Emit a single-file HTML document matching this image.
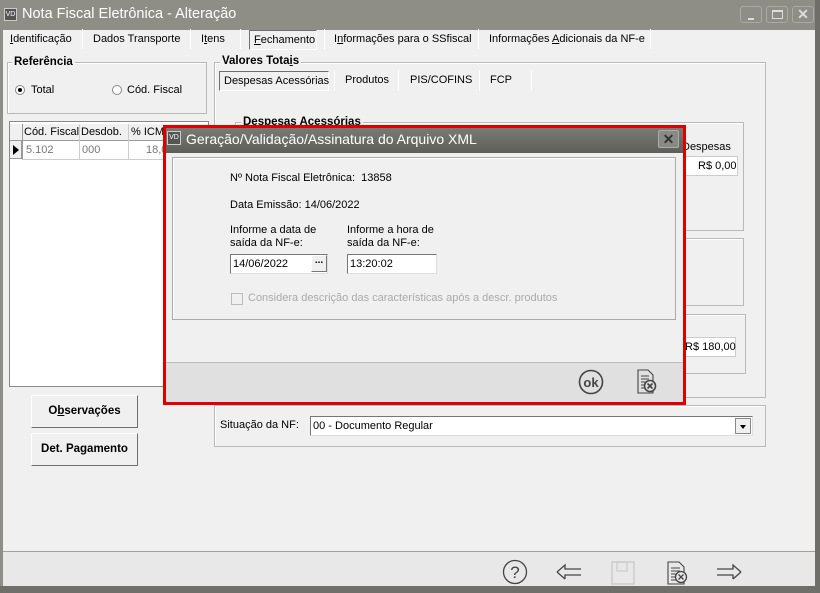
<!DOCTYPE html>
<html><head><meta charset="utf-8"><style>
*{box-sizing:border-box;margin:0;padding:0}
body{width:820px;height:593px;overflow:hidden;background:#f0f0f0;font-family:"Liberation Sans",sans-serif;font-size:11px;color:#000;position:relative}
.a{position:absolute}
.t{position:absolute;white-space:nowrap}
.grp{position:absolute;border:1px solid #b9b9b9;box-shadow:inset 1px 1px 0 #fff}
.lbl{position:absolute;background:#f0f0f0;font-weight:bold;padding:0 2px;font-size:11.5px}
.sep{position:absolute;width:1px;background:#a0a0a0;border-right:1px solid #fff}
.btn{position:absolute;background:#f0f0f0;border:1px solid;border-color:#fff #707070 #707070 #fff;font-weight:bold;text-align:center;font-size:11.5px}
</style></head><body>
<div class="a" style="left:0;top:0;width:820px;height:30px;background:#8e8d86"></div>
<div class="a" style="left:0;top:0;width:3px;height:593px;background:#8e8d86"></div>
<div class="a" style="left:815px;top:0;width:5px;height:593px;background:#6f6e69"></div>
<div class="a" style="left:0;top:586px;width:820px;height:7px;background:#6f6e69"></div>
<div class="a" style="left:4px;top:8px;width:13px;height:13px;background:#555;border:1px solid #ccc;color:#fff;font-size:7px;line-height:11px;text-align:center">VD</div>
<div class="t" style="left:22px;top:6px;font-size:14.5px;color:#fff">Nota Fiscal Eletrônica - Alteração</div>
<div class="a" style="left:740px;top:6px;width:22px;height:17px;border:1px solid #aaa;border-radius:3px;background:#8e8d86"><div class="a" style="left:7px;top:11px;width:6px;height:2px;background:#ddd"></div></div>
<div class="a" style="left:766px;top:6px;width:22px;height:17px;border:1px solid #aaa;border-radius:3px;background:#8e8d86"><div class="a" style="left:5px;top:3px;width:11px;height:9px;border:1px solid #ddd;border-top-width:2px"></div></div>
<div class="a" style="left:792px;top:6px;width:22px;height:17px;border:1px solid #aaa;border-radius:3px;background:#8e8d86;color:#ddd;font-weight:bold;font-size:14px;text-align:center;line-height:15px">✕</div>

<div class="t" style="left:10px;top:33px"><u>I</u>dentificação</div>
<div class="sep" style="left:82px;top:29px;height:20px"></div>
<div class="t" style="left:93px;top:33px">Dados Transporte</div>
<div class="sep" style="left:190px;top:29px;height:20px"></div>
<div class="t" style="left:201px;top:33px">I<u>t</u>ens</div>
<div class="sep" style="left:240px;top:29px;height:20px"></div>
<div class="a" style="left:249px;top:30px;width:68px;height:20px;border:1px solid;border-color:#707070 #fff #fff #707070;background:#f0f0f0"></div>
<div class="t" style="left:254px;top:34px"><u>F</u>echamento</div>
<div class="sep" style="left:324px;top:29px;height:20px"></div>
<div class="t" style="left:334px;top:33px">I<u>n</u>formações para o SSfiscal</div>
<div class="sep" style="left:478px;top:29px;height:20px"></div>
<div class="t" style="left:489px;top:33px">Informações <u>A</u>dicionais da NF-e</div>
<div class="sep" style="left:650px;top:29px;height:20px"></div>

<div class="grp" style="left:7px;top:62px;width:200px;height:52px"></div>
<div class="lbl" style="left:12px;top:56px">Referência</div>
<div class="a" style="left:15px;top:85px;width:10px;height:10px;border:1px solid #888;border-radius:50%;background:#fff"><div class="a" style="left:2px;top:2px;width:4px;height:4px;border-radius:50%;background:#000"></div></div>
<div class="t" style="left:31px;top:84px">Total</div>
<div class="a" style="left:112px;top:85px;width:10px;height:10px;border:1px solid #888;border-radius:50%;background:#fff"></div>
<div class="t" style="left:127px;top:84px">Cód. Fiscal</div>

<div class="a" style="left:9px;top:121px;width:200px;height:266px;background:#fff;border:1px solid #888"></div>
<div class="a" style="left:10px;top:124px;width:198px;height:17px;background:#f0f0f0;border-bottom:1px solid #999"></div>
<div class="a" style="left:10px;top:141px;width:12px;height:18px;background:#f0f0f0;border-right:1px solid #999;border-bottom:1px solid #999"></div>
<div class="a" style="left:13px;top:145px;width:0;height:0;border-left:6px solid #000;border-top:5px solid transparent;border-bottom:5px solid transparent"></div>
<div class="a" style="left:22px;top:124px;width:1px;height:35px;background:#999"></div>
<div class="a" style="left:79px;top:124px;width:1px;height:35px;background:#ccc"></div>
<div class="a" style="left:128px;top:124px;width:1px;height:35px;background:#ccc"></div>
<div class="a" style="left:22px;top:159px;width:186px;height:1px;background:#ccc"></div>
<div class="t" style="left:24px;top:126px">Cód. Fiscal</div>
<div class="t" style="left:81px;top:126px">Desdob.</div>
<div class="t" style="left:131px;top:126px">% ICMS</div>
<div class="t" style="left:26px;top:144px;color:#777">5.102</div>
<div class="t" style="left:82px;top:144px;color:#777">000</div>
<div class="t" style="left:146px;top:144px;color:#777">18,00</div>

<div class="btn" style="left:31px;top:395px;width:107px;height:33px;line-height:31px">O<u>b</u>servações</div>
<div class="btn" style="left:31px;top:433px;width:107px;height:33px;line-height:31px">Det. Pagamento</div>

<div class="grp" style="left:214px;top:62px;width:552px;height:336px"></div>
<div class="lbl" style="left:220px;top:55px">Valores Tota<u>i</u>s</div>
<div class="a" style="left:219px;top:71px;width:110px;height:20px;border:1px solid;border-color:#707070 #fff #fff #707070"></div>
<div class="t" style="left:224px;top:75px">Despesas Acessórias</div>
<div class="sep" style="left:334px;top:70px;height:21px"></div>
<div class="t" style="left:345px;top:74px">Produtos</div>
<div class="sep" style="left:398px;top:70px;height:21px"></div>
<div class="t" style="left:410px;top:74px">PIS/COFINS</div>
<div class="sep" style="left:479px;top:70px;height:21px"></div>
<div class="t" style="left:490px;top:74px">FCP</div>
<div class="sep" style="left:531px;top:70px;height:21px"></div>
<div class="grp" style="left:235px;top:122px;width:509px;height:109px"></div>
<div class="lbl" style="left:241px;top:116px">Despesas Acessórias</div>
<div class="t" style="left:682px;top:141px">Despesas</div>
<div class="a" style="left:680px;top:156px;width:58px;height:20px;background:#fff;border:1px solid #ccc"></div>
<div class="t" style="left:698px;top:160px">R$ 0,00</div>
<div class="grp" style="left:235px;top:238px;width:509px;height:68px"></div>
<div class="grp" style="left:226px;top:314px;width:520px;height:60px"></div>
<div class="a" style="left:680px;top:337px;width:56px;height:20px;background:#fff;border:1px solid #ccc"></div>
<div class="t" style="left:685px;top:341px">R$ 180,00</div>

<div class="grp" style="left:214px;top:405px;width:552px;height:42px"></div>
<div class="t" style="left:220px;top:419px">Situação da NF:</div>
<div class="a" style="left:310px;top:416px;width:443px;height:20px;background:#fff;border:1px solid;border-color:#777 #ddd #ddd #777"></div>
<div class="t" style="left:313px;top:420px">00 - Documento Regular</div>
<div class="a" style="left:735px;top:418px;width:16px;height:16px;background:#f0f0f0;border:1px solid #888"><div class="a" style="left:4px;top:6px;border-top:4px solid #000;border-left:3px solid transparent;border-right:3px solid transparent"></div></div>

<div class="a" style="left:3px;top:551px;width:812px;height:1px;background:#a0a0a0"></div>
<div class="a" style="left:3px;top:552px;width:812px;height:34px;background:#e8e8e8"></div>
<svg class="a" style="left:500px;top:558px" width="250" height="28" viewBox="0 0 250 28" fill="none" stroke="#444" stroke-width="1.3">
<circle cx="15" cy="14" r="11.5"/>
<text x="15" y="20" font-size="17" font-family="Liberation Sans" fill="#444" stroke="none" text-anchor="middle">?</text>
<path d="M57 14 L65 7 V11 H81 M65 21 V17 H81 M57 14 L65 21"/>
<rect x="112" y="4" width="22" height="22" stroke="#ccc" stroke-width="1.5"/>
<rect x="117" y="4" width="10" height="9" stroke="#ccc"/>
<path d="M168 4 H179 L184 9 V26 H168 Z M171 10 H180 M171 13 H180 M171 16 H178 M171 19 H177 M171 22 H177" stroke-width="1.1"/>
<circle cx="181" cy="19" r="5.5" fill="#e8e8e8"/><path d="M178.5 16.5 L183.5 21.5 M183.5 16.5 L178.5 21.5"/>
<path d="M241 14 L233 7 V11 H217 M233 21 V17 H217 M241 14 L233 21"/>
</svg>

<div class="a" style="left:163px;top:125px;width:523px;height:280px;border:3px solid #e00000;background:#f0f0f0"></div>
<div class="a" style="left:166px;top:128px;width:517px;height:25px;background:linear-gradient(#7a7a75,#5f5f5a)"></div>
<div class="a" style="left:167px;top:131px;width:14px;height:14px;background:#555;border:1px solid #ccc;color:#fff;font-size:7px;line-height:12px;text-align:center">VD</div>
<div class="t" style="left:186px;top:131px;font-size:14px;color:#fff">Geração/Validação/Assinatura do Arquivo XML</div>
<div class="a" style="left:658px;top:130px;width:21px;height:18px;background:#8a8a85;border:1px solid #aaa;border-radius:2px;color:#333;font-weight:bold;text-align:center;font-size:14px;line-height:16px">✕</div>
<div class="a" style="left:172px;top:157px;width:504px;height:163px;border:1px solid #aaa;box-shadow:inset 1px 1px 0 #fff"></div>
<div class="t" style="left:230px;top:172px">Nº Nota Fiscal Eletrônica:&nbsp; 13858</div>
<div class="t" style="left:230px;top:199px">Data Emissão: 14/06/2022</div>
<div class="t" style="left:230px;top:224px;line-height:13px">Informe a data de<br>saída da NF-e:</div>
<div class="t" style="left:347px;top:224px;line-height:13px">Informe a hora de<br>saída da NF-e:</div>
<div class="a" style="left:230px;top:254px;width:98px;height:20px;background:#fff;border:1px solid;border-color:#777 #ddd #ddd #777"></div>
<div class="t" style="left:233px;top:258px">14/06/2022</div>
<div class="a" style="left:311px;top:255px;width:16px;height:17px;background:#f0f0f0;border:1px solid;border-color:#fff #777 #777 #fff;font-size:10px;line-height:9px;text-align:center;font-weight:bold">...</div>
<div class="a" style="left:347px;top:254px;width:90px;height:20px;background:#fff;border:1px solid;border-color:#777 #ddd #ddd #777"></div>
<div class="t" style="left:350px;top:258px">13:20:02</div>
<div class="a" style="left:231px;top:293px;width:12px;height:12px;border:1px solid #bbb"></div>
<div class="t" style="left:248px;top:292px;color:#aaa">Considera descrição das características após a descr. produtos</div>
<div class="a" style="left:166px;top:362px;width:517px;height:40px;background:#e0e0e0;border-top:1px solid #bbb"></div>
<svg class="a" style="left:575px;top:368px" width="90" height="28" viewBox="0 0 90 28" fill="none" stroke="#444" stroke-width="1.6">
<circle cx="16" cy="14" r="11.5"/>
<text x="16" y="19" font-size="13" font-weight="bold" font-family="Liberation Sans" fill="#444" stroke="none" text-anchor="middle">ok</text>
<path d="M63 2 H73 L78 7 V25 H63 Z M66 8 H74 M66 11 H74 M66 14 H72 M66 17 H71 M66 20 H71" stroke-width="1.1"/>
<circle cx="75" cy="18" r="5.5" fill="#e0e0e0"/><path d="M72.5 15.5 L77.5 20.5 M77.5 15.5 L72.5 20.5"/>
</svg>
</body></html>
